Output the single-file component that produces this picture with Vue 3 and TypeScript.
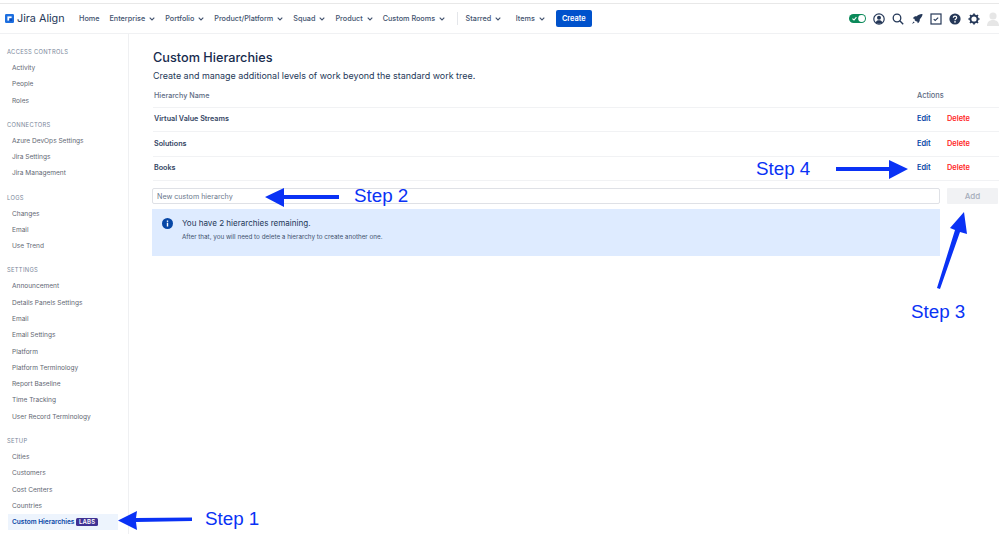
<script setup lang="ts">
const navItems = [
  { label: 'Home', caret: false },
  { label: 'Enterprise', caret: true },
  { label: 'Portfolio', caret: true },
  { label: 'Product/Platform', caret: true },
  { label: 'Squad', caret: true },
  { label: 'Product', caret: true },
  { label: 'Custom Rooms', caret: true },
]
const sections = [
  { title: 'ACCESS CONTROLS', items: ['Activity', 'People', 'Roles'] },
  { title: 'CONNECTORS', items: ['Azure DevOps Settings', 'Jira Settings', 'Jira Management'] },
  { title: 'LOGS', items: ['Changes', 'Email', 'Use Trend'] },
  { title: 'SETTINGS', items: ['Announcement', 'Details Panels Settings', 'Email', 'Email Settings', 'Platform', 'Platform Terminology', 'Report Baseline', 'Time Tracking', 'User Record Terminology'] },
  { title: 'SETUP', items: ['Cities', 'Customers', 'Cost Centers', 'Countries'] },
]
const rows = ['Virtual Value Streams', 'Solutions', 'Books']
</script>

<template>
  <div class="page">
    <header class="top">
      <div class="logo">
        <svg width="9" height="9" viewBox="0 0 9 9"><rect width="9" height="9" rx="1.200" fill="#1d6fe0" /><path d="M2.400 2.400h4.200v4.200H2.400z" fill="#fff" /><path d="M4.200 4.200h3v3h-3z" fill="#0b50c0" /></svg>
        <span class="logo-text">Jira Align</span>
      </div>
      <nav class="nav">
        <span v-for="n in navItems" :key="n.label" class="nav-item">
          {{ n.label }}
          <svg v-if="n.caret" class="caret" width="6" height="4" viewBox="0 0 6 4"><path d="M.7.7 3 3 5.300.7" fill="none" stroke="#42526e" stroke-width="1.100" /></svg>
        </span>
        <span class="divider"></span>
        <span class="nav-item wide">Starred
          <svg class="caret" width="6" height="4" viewBox="0 0 6 4"><path d="M.7.7 3 3 5.300.7" fill="none" stroke="#42526e" stroke-width="1.100" /></svg>
        </span>
        <span class="nav-item wide">Items
          <svg class="caret" width="6" height="4" viewBox="0 0 6 4"><path d="M.7.7 3 3 5.300.7" fill="none" stroke="#42526e" stroke-width="1.100" /></svg>
        </span>
        <button class="create">Create</button>
      </nav>
      <div class="tools">
        <svg width="17" height="9" viewBox="0 0 17 9"><rect width="17" height="9" rx="4.500" fill="#0b8a5a" /><circle cx="12.600" cy="4.500" r="3.400" fill="#fff" /><path d="M3.400 4.600 5 6l2.400-2.800" fill="none" stroke="#fff" stroke-width="1.100" /></svg>
        <svg width="12" height="12" viewBox="0 0 12 12"><circle cx="6" cy="6" r="5.200" fill="none" stroke="#253858" stroke-width="1.200" /><circle cx="6" cy="4.700" r="2" fill="#253858" /><path d="M2.600 9.600C3.200 7.800 4.500 7.300 6 7.300s2.800.5 3.400 2.300C8 11 4 11 2.600 9.600z" fill="#253858" /></svg>
        <svg width="12" height="12" viewBox="0 0 12 12"><circle cx="5" cy="5" r="3.800" fill="none" stroke="#253858" stroke-width="1.300" /><path d="m7.800 7.800 3.400 3.400" stroke="#253858" stroke-width="1.400" /></svg>
        <svg width="12" height="12" viewBox="0 0 12 12"><path d="M11.500 1C9 .8 7.200 1.800 5.800 3.200 4 3 2.800 3.600 1.800 5.200l2 .7-.3 1 1.600 1.600 1-.3.700 2c1.500-1 2.200-2.200 2-4 1.500-1.400 2.700-3.200 2.700-5.200z" fill="#253858" /><path d="M2.600 8.400 1 11l2.600-1.600z" fill="#253858" /></svg>
        <svg width="12" height="12" viewBox="0 0 12 12"><rect x="1" y="1" width="10" height="10" fill="none" stroke="#253858" stroke-width="1.200" /><path d="m3.700 6.200 1.500 1.300 3-2.800" fill="none" stroke="#253858" stroke-width="1.100" /></svg>
        <svg width="12" height="12" viewBox="0 0 12 12"><circle cx="6" cy="6" r="5.600" fill="#253858" /><path d="M4.300 4.700C4.400 3.700 5.100 3.200 6 3.200c1 0 1.700.6 1.700 1.400 0 1.300-1.700 1.300-1.700 2.600" fill="none" stroke="#fff" stroke-width="1.200" /><circle cx="6" cy="8.900" r=".8" fill="#fff" /></svg>
        <svg width="12" height="12" viewBox="0 0 12 12"><circle cx="6" cy="6" r="3.600" fill="none" stroke="#253858" stroke-width="2" /><path d="M6 .4v2M6 9.600v2M.4 6h2M9.600 6h2M2 2l1.400 1.400M8.600 8.600 10 10M2 10l1.400-1.400M8.600 3.400 10 2" stroke="#253858" stroke-width="1.700" /></svg>
        <svg width="12" height="14" viewBox="0 0 12 14"><circle cx="6" cy="4" r="3.600" fill="#e6e6e6" /><path d="M0 14c0-4 2.400-6 6-6s6 2 6 6z" fill="#e6e6e6" /></svg>
      </div>
    </header>

    <div class="body">
      <aside class="side">
        <section v-for="s in sections" :key="s.title" class="group">
          <div class="group-title">{{ s.title }}</div>
          <a v-for="i in s.items" :key="s.title + i" class="side-link">{{ i }}</a>
          <a v-if="s.title === 'SETUP'" class="side-link active">Custom Hierarchies <span class="labs">LABS</span></a>
        </section>
      </aside>

      <main class="main">
        <h1>Custom Hierarchies</h1>
        <p class="sub">Create and manage additional levels of work beyond the standard work tree.</p>
        <div class="row head">
          <span class="name">Hierarchy Name</span>
          <span class="actions">Actions</span>
        </div>
        <div v-for="r in rows" :key="r" class="row item">
          <span class="name">{{ r }}</span>
          <span class="actions"><a class="edit">Edit</a><a class="del">Delete</a></span>
        </div>
        <div class="form">
          <div class="form-left">
            <input class="input" placeholder="New custom hierarchy" />
            <div class="info">
              <svg width="11" height="11" viewBox="0 0 11 11"><circle cx="5.500" cy="5.500" r="5.500" fill="#0747a6" /><rect x="4.800" y="4.700" width="1.400" height="3.800" fill="#fff" /><rect x="4.800" y="2.500" width="1.400" height="1.400" fill="#fff" /></svg>
              <div>
                <div class="info-title">You have 2 hierarchies remaining.</div>
                <div class="info-text">After that, you will need to delete a hierarchy to create another one.</div>
              </div>
            </div>
          </div>
          <button class="add">Add</button>
        </div>
      </main>
    </div>

    <svg class="arrows" width="999" height="534" viewBox="0 0 999 534">
      <g fill="#0a32f5" stroke="none">
        <polygon points="118,520.500 137,511 136,518 192,517.500 192,521 136,522 137,530" />
        <polygon points="265,197 284,188 284,195 339,195 339,199 284,199 284,207" />
        <polygon points="908,169 889,160 889,167 836,167 836,171 889,171 889,179" />
        <polygon points="964,212 967,234 960,232 940,289 937,288 955,230 950,228" />
      </g>
    </svg>
    <span class="step s1">Step 1</span>
    <span class="step s2">Step 2</span>
    <span class="step s3">Step 3</span>
    <span class="step s4">Step 4</span>
  </div>
</template>

<style>
html, body { margin: 0; background: #fff; overflow: hidden; }
</style>

<style scoped>
.page {
  position: relative;
  width: 999px;
  height: 534px;
  overflow: hidden;
  font-family: Inter, "Liberation Sans", sans-serif;
  color: #253858;
  background: #fff;
  padding-top: 3px;
  box-sizing: border-box;
}
.top {
  display: flex;
  align-items: center;
  height: 29px;
  border-top: 1px solid #e8e8e8;
  border-bottom: 1px solid #f0f1f3;
  padding-left: 5px;
  box-sizing: content-box;
}
.logo { display: flex; align-items: center; gap: 3px; width: 74px; }
.logo-text { font-size: 10.800px; color: #253858; }
.nav { display: flex; align-items: center; }
.nav-item {
  display: flex;
  align-items: center;
  gap: 4px;
  font-size: 7.250px;
  font-weight: 500;
  color: #42526e;
  margin-right: 10px;
  white-space: nowrap;
}
.nav-item.wide { margin-right: 14.500px; }
.divider { width: 1px; height: 13px; background: #e4e6ea; margin-right: 8px; margin-left: 1.500px; }
.create {
  width: 36px;
  height: 17px;
  margin-left: -3.500px;
  border: 0;
  border-radius: 2px;
  background: #0052cc;
  color: #fff;
  font: 600 7.400px Inter, "Liberation Sans", sans-serif;
  padding: 0;
}
.tools { margin-left: auto; display: flex; align-items: center; gap: 7px; }
.body { display: flex; height: 500px; }
.side {
  flex: none;
  width: 129px;
  border-right: 1px solid #eff0f2;
  padding: 14px 0 0 7px;
  box-sizing: border-box;
}
.group { margin-bottom: 11.900px; display: flex; flex-direction: column; }
.group-title { font-size: 5.800px; line-height: 8px; color: #7a869a; letter-spacing: .3px; margin-bottom: 4px; white-space: nowrap; }
.side-link {
  font-size: 6.550px;
  line-height: 16.300px;
  height: 16.300px;
  color: #5f6773;
  padding-left: 5px;
  white-space: nowrap;
}
.side-link.active {
  width: 106px;
  margin-left: 1px;
  padding-left: 4px;
  background: #edf4fd;
  color: #0747a6;
  font-weight: 600;
  display: flex;
  align-items: center;
  gap: 2px;
}
.labs {
  background: #403294;
  color: #fff;
  font-size: 6px;
  font-weight: 600;
  line-height: 8px;
  padding: 0 2.500px;
  border-radius: 1.500px;
  letter-spacing: .2px;
}
.main { flex: 1; min-width: 0; padding: 15px 0 0 24px; }
h1 { margin: 0; font-size: 12.700px; line-height: 18px; font-weight: 500; color: #172b4d; }
.sub { margin: 0; padding-top: 1px; font-size: 8.950px; line-height: 15px; color: #253858; }
.row {
  display: flex;
  align-items: center;
  justify-content: space-between;
  border-bottom: 1px solid #f1f2f4;
  padding-left: 1px;
  box-sizing: border-box;
}
.head { height: 24.500px; margin-top: .5px; }
.item { height: 24.400px; padding-bottom: 1.500px; }
.name { font-size: 7.200px; }
.head .name { color: #5e6c84; font-weight: 500; }
.item .name { font-weight: 600; color: #344563; }
.actions { width: 82px; display: flex; gap: 15px; font-size: 7.400px; }
.head .actions { color: #5e6c84; font-weight: 500; }
.edit { color: #0747a6; font-weight: 600; width: 15px; }
.del { color: #ff1f1f; font-weight: 600; }
.form { display: flex; gap: 7px; margin-top: 7px; margin-left: -1px; align-items: flex-start; }
.form-left { width: 788px; flex: none; }
.input {
  display: block;
  width: 100%;
  height: 16px;
  box-sizing: border-box;
  border: 1px solid #dfe1e6;
  border-radius: 2px;
  padding: 0 4px;
  font: 7.150px Inter, "Liberation Sans", sans-serif;
  outline: none;
}
.input::placeholder { color: #6b778c; opacity: 1; }
.info {
  display: flex;
  gap: 9px;
  height: 47px;
  margin-top: 4.500px;
  padding: 9.500px 0 0 10px;
  box-sizing: border-box;
  background: #deebff;
}
.info-title { font-size: 8.050px; line-height: 11px; color: #253858; }
.info-text { font-size: 6.300px; line-height: 9px; margin-top: 3.500px; color: #42526e; }
.add {
  width: 51px;
  height: 16px;
  border: 0;
  border-radius: 1px;
  background: #f1f2f4;
  color: #a5adba;
  font: 500 8px Inter, "Liberation Sans", sans-serif;
  padding: 0;
}
.arrows { position: absolute; left: 0; top: 0; pointer-events: none; }
.step {
  position: absolute;
  font-family: "Liberation Sans", Arial, sans-serif;
  font-size: 18.800px;
  line-height: 22px;
  color: #0a32f5;
  white-space: nowrap;
}
.s1 { left: 205px; top: 508px; }
.s2 { left: 354px; top: 185px; }
.s3 { left: 911px; top: 301px; }
.s4 { left: 756px; top: 158px; }
</style>
